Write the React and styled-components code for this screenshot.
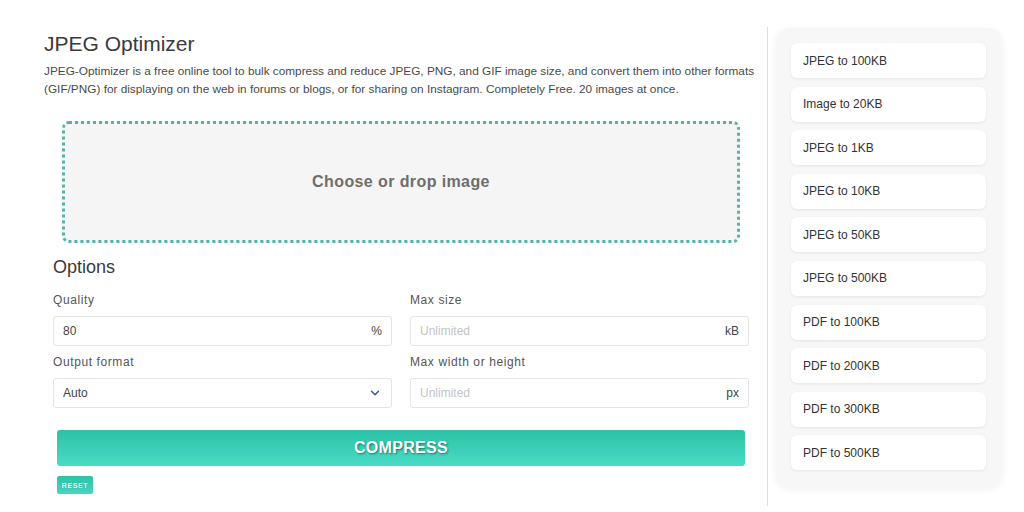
import React from 'react';
import styled, { createGlobalStyle } from 'styled-components';
import { ChevronDown } from 'lucide-react';

const GlobalStyle = createGlobalStyle`
  body {
    margin: 0;
    background: #ffffff;
    font-family: "Liberation Sans", Arial, sans-serif;
    color: #333;
  }
`;

const presets = [
  'JPEG to 100KB',
  'Image to 20KB',
  'JPEG to 1KB',
  'JPEG to 10KB',
  'JPEG to 50KB',
  'JPEG to 500KB',
  'PDF to 100KB',
  'PDF to 200KB',
  'PDF to 300KB',
  'PDF to 500KB',
];

const App = () => {
  return (
    <>
      <GlobalStyle />
      <Page>
        <Main>
          <Title>JPEG Optimizer</Title>
          <Description>
            JPEG-Optimizer is a free online tool to bulk compress and reduce JPEG, PNG, and GIF image size, and convert them into other formats
            (GIF/PNG) for displaying on the web in forums or blogs, or for sharing on Instagram. Completely Free. 20 images at once.
          </Description>

          <DropZone>Choose or drop image</DropZone>

          <Options>
            <OptionsTitle>Options</OptionsTitle>
            <FieldGrid>
              <Field>
                <Label>Quality</Label>
                <InputBox>
                  <Value>80</Value>
                  <Suffix>%</Suffix>
                </InputBox>
              </Field>
              <Field>
                <Label>Max size</Label>
                <InputBox>
                  <Value $placeholder>Unlimited</Value>
                  <Suffix>kB</Suffix>
                </InputBox>
              </Field>
              <Field>
                <Label>Output format</Label>
                <InputBox>
                  <Value>Auto</Value>
                  <ChevronDown size={14} strokeWidth={2.6} color="#40589a" />
                </InputBox>
              </Field>
              <Field>
                <Label>Max width or height</Label>
                <InputBox>
                  <Value $placeholder>Unlimited</Value>
                  <Suffix>px</Suffix>
                </InputBox>
              </Field>
            </FieldGrid>
          </Options>

          <CompressButton>COMPRESS</CompressButton>
          <ResetButton>RESET</ResetButton>
        </Main>

        <Aside>
          <Panel>
            {presets.map((p) => (
              <PresetItem key={p}>{p}</PresetItem>
            ))}
          </Panel>
        </Aside>
      </Page>
    </>
  );
};

export default App;

const Page = styled.div`
  display: flex;
  align-items: flex-start;
  width: 1024px;
  height: 512px;
  padding: 0 0 0 44px;
  box-sizing: border-box;
  overflow: hidden;
`;

const Main = styled.div`
  width: 712px;
  padding-top: 31px;
  display: flex;
  flex-direction: column;
`;

const Title = styled.h1`
  margin: 0;
  font-size: 21px;
  font-weight: normal;
  line-height: 26px;
  color: #3a3a3a;
`;

const Description = styled.p`
  margin: 6px 0 0;
  font-size: 11.8px;
  line-height: 17.5px;
  color: #4a4a4a;
`;

const DropZone = styled.div`
  margin: 23px 16px 0 18px;
  height: 122px;
  box-sizing: border-box;
  border: 3px dotted #56b2a4;
  border-radius: 7px;
  background: #f5f5f5;
  display: flex;
  align-items: center;
  justify-content: center;
  font-size: 16px;
  font-weight: bold;
  letter-spacing: 0.4px;
  color: #6e6e6e;
`;

const Options = styled.div`
  padding: 13px 7px 0 9px;
`;

const OptionsTitle = styled.h2`
  margin: 0;
  font-size: 18px;
  font-weight: normal;
  line-height: 22px;
  color: #3a3a3a;
`;

const FieldGrid = styled.div`
  display: grid;
  grid-template-columns: 339px 339px;
  column-gap: 18px;
  row-gap: 8px;
  margin-top: 14px;
`;

const Field = styled.div`
  display: flex;
  flex-direction: column;
  gap: 8px;
`;

const Label = styled.div`
  font-size: 12px;
  line-height: 16px;
  letter-spacing: 0.6px;
  color: #555;
`;

const InputBox = styled.div`
  height: 30px;
  box-sizing: border-box;
  border: 1px solid #e4e4e4;
  border-radius: 3px;
  background: #fff;
  display: flex;
  align-items: center;
  justify-content: space-between;
  padding: 0 9px 0 9px;
`;

const Value = styled.span`
  font-size: 12px;
  color: ${(p) => (p.$placeholder ? '#c4c4c4' : '#444')};
`;

const Suffix = styled.span`
  font-size: 12px;
  color: #444;
`;

const CompressButton = styled.button`
  margin: 22px 11px 0 13px;
  height: 36px;
  border: none;
  border-radius: 3px;
  background: linear-gradient(to bottom, #2cc2a6, #4adbc5);
  color: #fff;
  font-family: "Liberation Sans", Arial, sans-serif;
  font-size: 16px;
  font-weight: bold;
  letter-spacing: 0.3px;
  text-shadow: 1px 1px 2px rgba(0, 0, 0, 0.45);
  cursor: pointer;
`;

const ResetButton = styled.button`
  align-self: flex-start;
  margin: 10px 0 0 13px;
  width: 36px;
  height: 18px;
  padding: 0;
  border: none;
  border-radius: 2px;
  background: linear-gradient(to bottom, #2cc2a6, #48d6c0);
  color: #fff;
  font-family: "Liberation Sans", Arial, sans-serif;
  font-size: 7px;
  font-weight: bold;
  letter-spacing: 0.6px;
  text-shadow: 0 0 1px rgba(0, 0, 0, 0.4);
`;

const Aside = styled.div`
  margin: 27px 0 0 11px;
  height: 478px;
  border-left: 1px solid #dedede;
  padding: 1px 0 0 8px;
`;

const Panel = styled.div`
  width: 226px;
  box-sizing: border-box;
  padding: 15px 16px 17px 15px;
  background: #f7f7f7;
  border-radius: 14px;
  box-shadow: 0 2px 8px rgba(0, 0, 0, 0.06);
  display: flex;
  flex-direction: column;
  gap: 8.6px;
`;

const PresetItem = styled.div`
  height: 35px;
  display: flex;
  align-items: center;
  padding-left: 12px;
  background: #fff;
  border-radius: 6px;
  box-shadow: 0 1px 3px rgba(0, 0, 0, 0.08);
  font-size: 12px;
  color: #333;
`;
